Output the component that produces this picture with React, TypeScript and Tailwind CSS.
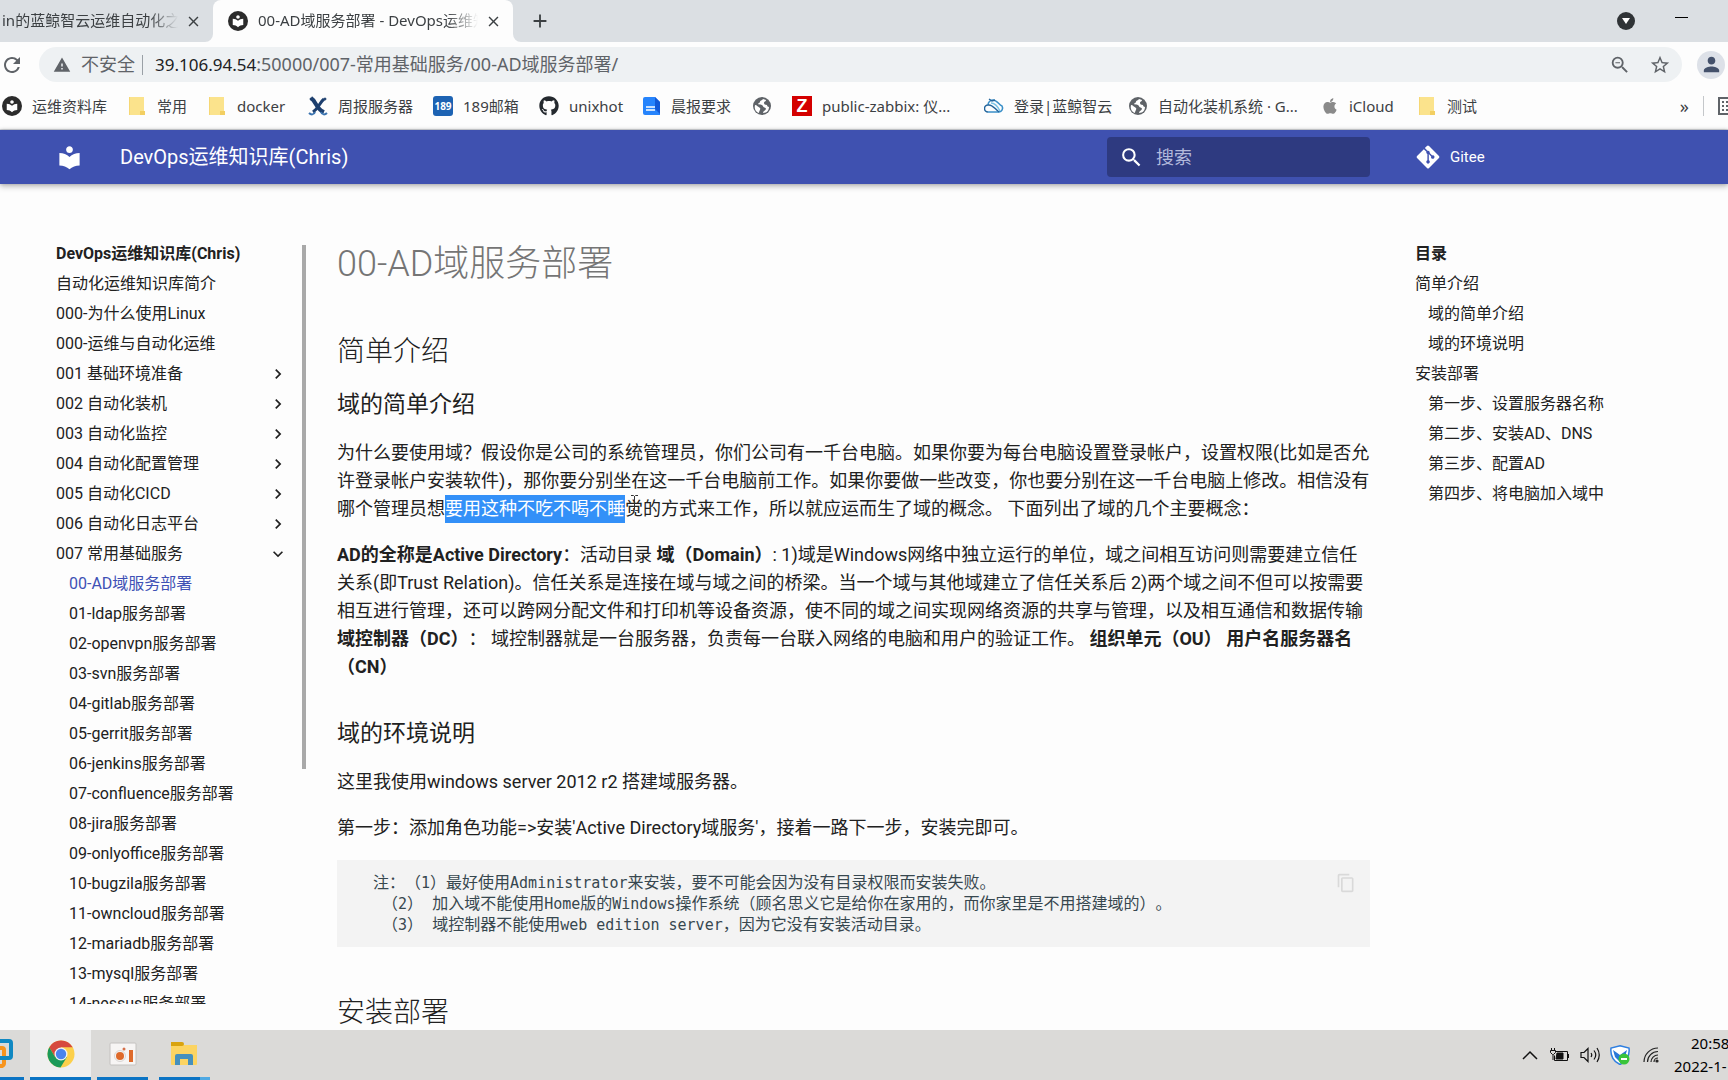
import React from 'react';
import {
  MdAdd,
  MdChevronRight,
  MdClose,
  MdContentCopy,
  MdExpandMore,
  MdLocalLibrary,
  MdPerson,
  MdRefresh,
  MdSearch,
  MdStarBorder,
  MdWarning,
  MdZoomOut,
} from 'react-icons/md';
import { FaApple, FaGitAlt, FaGithub } from 'react-icons/fa';

const LibraryBadge = () => (
  <span className="flex size-5 shrink-0 items-center justify-center rounded-full bg-[#2b2b2b] text-white">
    <MdLocalLibrary className="size-[14px]" />
  </span>
);

const NoteIcon = () => (
  <svg viewBox="0 0 20 20" className="size-5 shrink-0">
    <path d="M2 1h15v14h1v4H2z" fill="#fbe38c" />
    <path d="M13 19v-4h5v4z" fill="#f3cf62" />
    <path d="M2 1h1v18H2z" fill="#f6d774" />
  </svg>
);

const ConfluenceIcon = () => (
  <svg viewBox="0 0 20 20" className="size-5 shrink-0" fill="none" stroke="#1d3f6e">
    <path d="M3 2c5 3 5 11 13 14" strokeWidth="4" />
    <path d="M16 3c-5 4-5 9-11 13" strokeWidth="3" />
    <path d="M1 17c2 2 5 2 6-1M19 17c-2 2-5 2-6-1" strokeWidth="2" stroke="#3b73af" />
    <circle cx="3" cy="3" r="1" fill="#1d3f6e" />
    <circle cx="17" cy="3" r="1" fill="#1d3f6e" />
  </svg>
);

const Mail189Icon = () => (
  <span className="flex size-5 shrink-0 items-center justify-center rounded-[3px] bg-[#1d63b3] font-['Open_Sans',sans-serif] text-[10px] font-bold text-white">
    189
  </span>
);

const DocIcon = () => (
  <svg viewBox="0 0 20 20" className="size-5 shrink-0">
    <path d="M4 1h10l5 5v13H4a2 2 0 0 1-2-2V3a2 2 0 0 1 2-2z" fill="#2684fc" />
    <path d="M14 1l5 5v12l-5-5z" fill="#1259d6" />
    <path d="M5 11h9M5 14h9" stroke="#fff" strokeWidth="1.5" />
  </svg>
);

const GlobeIcon = () => (
  <svg viewBox="0 0 20 20" className="size-5 shrink-0">
    <circle cx="10" cy="10" r="9" fill="#5f6368" />
    <path d="M11 3c-1 2-3 1-3 3 0 1-2 1-2 2 1 1 4 0 5 2 0 2 3 1 3 3-1 2-3 2-3 4 4 0 6-3 6-6-1 0-2-1-2-2-2 0-3-1-3-2 0-2 2-1 2-3z" fill="#fff" />
    <path d="M3 9c2 0 3 2 5 3 1 1-1 3-1 5-3-1-5-4-4-8z" fill="#fff" />
  </svg>
);

const ZabbixIcon = () => (
  <span className="flex size-5 shrink-0 items-center justify-center bg-[#d40000] font-['Liberation_Sans',sans-serif] text-[18px] font-bold text-white">
    Z
  </span>
);

const CloudIcon = () => (
  <svg viewBox="0 0 20 20" className="size-5 shrink-0" fill="none" strokeWidth="1.5">
    <path d="M4 16h11a4 4 0 0 0 3-6c-3-1-5-6-9-6a5 5 0 0 0-5 5" stroke="#3a8fc8" />
    <path d="M4 16a3.500 3.500 0 0 1 0-7c4-1 6 3 11 7M5 3l3 2 3-1" stroke="#23659c" />
    <path d="M7 7c4 0 7 4 9 8" stroke="#7cc4e6" />
  </svg>
);

const BOOKMARKS = [
  { label: '运维资料库', width: 'w-[125px]', icon: <LibraryBadge /> },
  { label: '常用', width: 'w-[80px]', icon: <NoteIcon /> },
  { label: 'docker', width: 'w-[101px]', icon: <NoteIcon /> },
  { label: '周报服务器', width: 'w-[125px]', icon: <ConfluenceIcon /> },
  { label: '189邮箱', width: 'w-[106px]', icon: <Mail189Icon /> },
  { label: 'unixhot', width: 'w-[102px]', icon: <FaGithub className="size-5 shrink-0 text-[#24292e]" /> },
  { label: '晨报要求', width: 'w-[111px]', icon: <DocIcon /> },
  { label: '', width: 'w-[40px]', icon: <GlobeIcon /> },
  { label: 'public-zabbix: 仪...', width: 'w-[192px]', icon: <ZabbixIcon /> },
  { label: '登录|蓝鲸智云', width: 'w-[144px]', icon: <CloudIcon /> },
  { label: '自动化装机系统 · G...', width: 'w-[193px]', icon: <GlobeIcon /> },
  { label: 'iCloud', width: 'w-[96px]', icon: <FaApple className="size-[18px] shrink-0 text-[#8a8a8a]" /> },
  { label: '测试', width: 'w-[80px]', icon: <NoteIcon /> },
];

const NAV = [
  { label: '自动化运维知识库简介' },
  { label: '000-为什么使用Linux' },
  { label: '000-运维与自动化运维' },
  { label: '001 基础环境准备', state: 'closed' },
  { label: '002 自动化装机', state: 'closed' },
  { label: '003 自动化监控', state: 'closed' },
  { label: '004 自动化配置管理', state: 'closed' },
  { label: '005 自动化CICD', state: 'closed' },
  { label: '006 自动化日志平台', state: 'closed' },
  { label: '007 常用基础服务', state: 'open' },
];

const SUB_NAV = [
  '00-AD域服务部署',
  '01-ldap服务部署',
  '02-openvpn服务部署',
  '03-svn服务部署',
  '04-gitlab服务部署',
  '05-gerrit服务部署',
  '06-jenkins服务部署',
  '07-confluence服务部署',
  '08-jira服务部署',
  '09-onlyoffice服务部署',
  '10-bugzila服务部署',
  '11-owncloud服务部署',
  '12-mariadb服务部署',
  '13-mysql服务部署',
  '14-nessus服务部署',
];

const TOC = [
  { label: '简单介绍', children: ['域的简单介绍', '域的环境说明'] },
  {
    label: '安装部署',
    children: ['第一步、设置服务器名称', '第二步、安装AD、DNS', '第三步、配置AD', '第四步、将电脑加入域中'],
  },
];

const TabStrip = () => (
  <div className="flex h-[42px] shrink-0 bg-[#dbdfe3] text-[15px] text-[#3c4043]">
    <div className="flex w-[213px] items-center justify-between pr-[11px] pl-[2px]">
      <span className="w-[176px] overflow-hidden pb-[2px] whitespace-nowrap [mask-image:linear-gradient(to_right,#000_84%,transparent)]">
        in的蓝鲸智云运维自动化之旅
      </span>
      <button aria-label="关闭标签页">
        <MdClose className="size-[17px]" />
      </button>
    </div>
    <div className="relative flex w-[300px] items-center rounded-t-lg bg-[#fdfdfd] pr-[11px] pl-[15px]">
      <svg viewBox="0 0 8 8" className="absolute bottom-0 -left-2 size-2">
        <path d="M8 0v8H0a8 8 0 0 0 8-8z" fill="#fdfdfd" />
      </svg>
      <svg viewBox="0 0 8 8" className="absolute -right-2 bottom-0 size-2">
        <path d="M0 0v8h8a8 8 0 0 1-8-8z" fill="#fdfdfd" />
      </svg>
      <LibraryBadge />
      <span className="ml-[10px] w-[220px] overflow-hidden pb-[2px] whitespace-nowrap [mask-image:linear-gradient(to_right,#000_86%,transparent)]">
        00-AD域服务部署 - DevOps运维知识库
      </span>
      <button aria-label="关闭标签页" className="ml-auto">
        <MdClose className="size-[17px]" />
      </button>
    </div>
    <button aria-label="新标签页" className="ml-[16px]">
      <MdAdd className="size-[22px]" />
    </button>
    <button aria-label="搜索标签页" className="ml-auto">
      <svg viewBox="0 0 18 18" className="size-[18px]">
        <circle cx="9" cy="9" r="9" fill="#2f3336" />
        <path d="M5 6h8l-4 6z" fill="#fff" />
      </svg>
    </button>
    <button aria-label="最小化" className="mr-[40px] ml-[40px] flex w-[13px] items-center pb-2">
      <span className="h-px w-full bg-black" />
    </button>
  </div>
);

const AddressBar = () => (
  <div className="flex h-[45px] shrink-0 items-center bg-[#fdfdfd] text-[#5f6368]">
    <button aria-label="重新加载" className="w-[39px]">
      <MdRefresh className="size-6" />
    </button>
    <div className="flex h-[35px] flex-1 items-center rounded-full bg-[#eef1f3] pr-[11px] pl-[14px] text-[18px]">
      <MdWarning className="size-[18px]" />
      <span className="ml-[10px]">不安全</span>
      <span className="mx-[7px] h-5 w-px bg-[#9aa0a6]" />
      <span className="ml-[5px]">
        <span className="text-[17px] text-[#202124]">39.106.94.54</span>
        :50000/007-常用基础服务/00-AD域服务部署/
      </span>
      <button aria-label="缩放" className="ml-auto">
        <MdZoomOut className="size-[22px]" />
      </button>
      <button aria-label="收藏" className="ml-[18px]">
        <MdStarBorder className="size-[22px]" />
      </button>
    </div>
    <button
      aria-label="个人资料"
      className="mr-[3px] ml-[15px] flex size-7 items-center justify-center rounded-full bg-[#dde1e8] text-[#44516b]"
    >
      <MdPerson className="size-[23px]" />
    </button>
  </div>
);

const BookmarkBar = () => (
  <div className="flex h-[43px] shrink-0 items-center overflow-hidden border-b border-[#dadce0] bg-[#fdfdfd] pb-1 pl-[2px] text-[15px] text-[#3c4043]">
    {BOOKMARKS.map((b, i) => (
      <button key={i} aria-label={b.label || '书签'} className={`flex shrink-0 items-center gap-[10px] whitespace-nowrap ${b.width}`}>
        {b.icon}
        {b.label}
      </button>
    ))}
    <button aria-label="更多书签" className="ml-auto text-[18px] leading-none">
      »
    </button>
    <span className="ml-[14px] h-5 w-px shrink-0 bg-[#c4c7ca]" />
    <button aria-label="阅读清单" className="ml-[14px] w-[10px] overflow-hidden">
      <svg viewBox="0 0 18 18" className="size-[18px]" fill="none" stroke="#5f6368" strokeWidth="2">
        <path d="M1 1h16v16H1z" />
        <path d="M4 5h2M4 9h2M4 13h2M8 5h6M8 9h6M8 13h6" />
      </svg>
    </button>
  </div>
);

const SiteHeader = () => (
  <header className="relative z-10 flex h-[54px] shrink-0 items-center bg-[#3f51b0] text-white shadow-[0_0_4px_rgba(0,0,0,0.25),0_3px_6px_rgba(0,0,0,0.2)]">
    <a href="#" aria-label="首页" className="ml-[56px]">
      <MdLocalLibrary className="size-[27px]" />
    </a>
    <span className="ml-[37px] text-[20px]">DevOps运维知识库(Chris)</span>
    <label className="ml-auto flex h-10 w-[263px] items-center rounded-sm bg-[#2e3a80] pl-[12px]">
      <MdSearch className="size-[25px] shrink-0" />
      <input
        aria-label="搜索"
        placeholder="搜索"
        className="ml-[12px] w-full bg-transparent text-[18px] outline-none placeholder:text-[#b3b9dc]"
      />
    </label>
    <a href="#" className="flex w-[358px] items-center gap-[9px] pl-[45px] text-[15px]">
      <FaGitAlt className="size-[26px]" />
      Gitee
    </a>
  </header>
);

const Sidebar = () => (
  <aside className="flex w-[306px] shrink-0 pt-[55px] pb-[26px] pl-[56px]">
    <nav className="flex-1 overflow-hidden text-[16px] leading-[30px] whitespace-nowrap">
      <div className="font-bold">DevOps运维知识库(Chris)</div>
      {NAV.map(item => (
        <a key={item.label} href="#" className="flex items-center justify-between pr-[14px]">
          {item.label}
          {item.state === 'closed' && <MdChevronRight className="size-5" />}
          {item.state === 'open' && <MdExpandMore className="size-5" />}
        </a>
      ))}
      <div className="pl-[13px]">
        {SUB_NAV.map((label, i) => (
          <a key={label} href="#" className={i === 0 ? 'block text-[#4051b5]' : 'block'}>
            {label}
          </a>
        ))}
      </div>
    </nav>
    <div className="mt-[6px] h-[524px] w-1 bg-[#a9a9a9]" />
  </aside>
);

// Latin runs in the code block are set one pixel smaller than the Chinese text
const L = ({ children }: { children: React.ReactNode }) => <span className="text-[15px] leading-[18px]">{children}</span>;

const Article = () => (
  <article className="mr-[45px] ml-[31px] min-w-0 flex-1 pt-14 text-[18px] leading-7 [text-spacing-trim:space-all]">
    <h1 className="text-[36px] leading-[48px] font-light text-[#757575]">00-AD域服务部署</h1>
    <h2 className="mt-[44px] text-[28px] leading-10 font-light">简单介绍</h2>
    <h3 className="mt-4 text-[23px] leading-[34px]">域的简单介绍</h3>
    <p className="mt-[17px]">
      为什么要使用域？假设你是公司的系统管理员，你们公司有一千台电脑。如果你要为每台电脑设置登录帐户，设置权限(比如是否允许登录帐户安装软件)，那你要分别坐在这一千台电脑前工作。如果你要做一些改变，你也要分别在这一千台电脑上修改。相信没有哪个管理员想
      <span className="relative inline-block bg-[#3390f8] text-white">
        要用这种不吃不喝不睡
        <svg viewBox="0 0 8 16" className="absolute top-0 -right-[13px] h-4 w-2" fill="none" stroke="#333">
          <path d="M1 .5h2.500l1 1 1-1H8M4.500 1v13M1 15.500h2.500l1-1 1 1H8" />
        </svg>
      </span>
      觉的方式来工作，所以就应运而生了域的概念。 下面列出了域的几个主要概念：
    </p>
    <p className="mt-[18px]">
      <strong>AD的全称是Active Directory</strong>：活动目录 <strong>域（Domain）</strong>
      : 1)域是Windows网络中独立运行的单位，域之间相互访问则需要建立信任关系(即Trust Relation)。信任关系是连接在域与域之间的桥梁。当一个域与其他域建立了信任关系后
      2)两个域之间不但可以按需要相互进行管理，还可以跨网分配文件和打印机等设备资源，使不同的域之间实现网络资源的共享与管理，以及相互通信和数据传输{' '}
      <strong>域控制器（DC）</strong>： 域控制器就是一台服务器，负责每一台联入网络的电脑和用户的验证工作。{' '}
      <strong>组织单元（OU） 用户名服务器名（CN）</strong>
    </p>
    <h3 className="mt-[36px] text-[23px] leading-[34px]">域的环境说明</h3>
    <p className="mt-[17px]">这里我使用windows server 2012 r2 搭建域服务器。</p>
    <p className="mt-[18px]">第一步：添加角色功能=&gt;安装'Active Directory域服务'，接着一路下一步，安装完即可。</p>
    <div className="relative mt-[18px] bg-[#f3f3f3] py-3 pl-[36px] text-[#37474f]">
      <pre className="font-['DejaVu_Sans_Mono','Noto_Sans_CJK_SC',monospace] text-[16px] leading-[21px]">
        注：（<L>1</L>）最好使用<L>Administrator</L>来安装，要不可能会因为没有目录权限而安装失败。{'\n'}
        <L> </L>（<L>2</L>）<L> </L>加入域不能使用<L>Home</L>版的<L>Windows</L>操作系统（顾名思义它是给你在家用的，而你家里是不用搭建域的）。{'\n'}
        <L> </L>（<L>3</L>）<L> </L>域控制器不能使用<L>web edition server</L>，因为它没有安装活动目录。
      </pre>
      <button aria-label="复制" className="absolute top-[13px] right-[14px] text-[#d9d9d9]">
        <MdContentCopy className="size-5" />
      </button>
    </div>
    <h2 className="mt-[46px] text-[28px] leading-10 font-light">安装部署</h2>
  </article>
);

const TableOfContents = () => (
  <nav className="w-[313px] shrink-0 pt-[55px] text-[16px] leading-[30px]">
    <div className="font-bold">目录</div>
    {TOC.map(section => (
      <div key={section.label}>
        <a href="#" className="block">
          {section.label}
        </a>
        {section.children.map(c => (
          <a key={c} href="#" className="block pl-[13px]">
            {c}
          </a>
        ))}
      </div>
    ))}
  </nav>
);

const Taskbar = () => (
  <footer className="flex h-[50px] shrink-0 items-stretch overflow-hidden bg-[#dbdad8] text-black">
    <button aria-label="VMware" className="flex w-6 items-center border-b-3 border-[#0b74c4]">
      <svg viewBox="0 0 13 31" className="h-[31px] w-[13px]" fill="none" strokeWidth="4">
        <path d="M-4 10h6a2 2 0 0 1 2 2v13a3 3 0 0 1-2 3h-6" stroke="#f7941d" />
        <path d="M-4 3h13a2 2 0 0 1 2 2v13a2 2 0 0 1-2 2h-13" stroke="#1088c2" />
      </svg>
    </button>
    <button aria-label="Chrome" className="ml-[6px] flex w-[61px] items-center justify-center border-b-3 border-[#0b74c4] bg-[#efefef]">
      <svg viewBox="0 0 28 28" className="size-7">
        <circle cx="14" cy="14" r="13.500" fill="#fcd04b" />
        <path d="M14 14 8.200 17.300 2.300 7.200A13.500 13.500 0 0 1 25.700 7.300H14z" fill="#d64a3d" />
        <path d="M2.300 7.200A13.500 13.500 0 0 0 13.500 27.500L19.800 17.300 14 14l-5.800 3.300z" fill="#1b9a59" />
        <circle cx="14" cy="14" r="6.500" fill="#f4f4f4" />
        <circle cx="14" cy="14" r="5.200" fill="#4a84ee" />
      </svg>
    </button>
    <button aria-label="录屏" className="ml-[6px] flex w-[51px] items-center justify-center border-b-3 border-[#0b74c4]">
      <svg viewBox="0 0 28 24" className="h-6 w-7">
        <rect x="1" y="1" width="26" height="22" rx="1" fill="#f7f5f4" stroke="#c4c2c0" />
        <circle cx="11" cy="14" r="5.500" fill="none" stroke="#d9d6d4" />
        <circle cx="11" cy="14" r="4" fill="#de6a2b" />
        <circle cx="15" cy="7" r="1.500" fill="#d5704a" />
        <path d="M22 8v12" stroke="#de6a2b" strokeWidth="4" />
      </svg>
    </button>
    <button aria-label="文件资源管理器" className="ml-[11px] flex w-[41px] items-center justify-end border-b-3 border-[#0b74c4] pr-[2px]">
      <svg viewBox="0 0 28 24" className="h-6 w-7">
        <path d="M1 3h26v19a1 1 0 0 1-1 1H2a1 1 0 0 1-1-1z" fill="#fcd462" />
        <path d="M1 0h11a2 2 0 0 1 0 4H1z" fill="#d9a30f" />
        <path d="M5 23V14a2 2 0 0 1 2-2h14a2 2 0 0 1 2 2v9h-5v-6h-8v6z" fill="#4690bd" />
      </svg>
    </button>
    <span className="w-[10px] border-b-3 border-[#4fa9e3]" />
    <div className="ml-auto flex items-center">
      <svg viewBox="0 0 16 10" className="h-[10px] w-4" fill="none" stroke="#111" strokeWidth="1.500">
        <path d="M1 9l7-7 7 7" />
      </svg>
      <svg viewBox="0 0 20 16" className="ml-[12px] h-4 w-5" fill="none" stroke="#111">
        <path d="M5.500 4.500h12v9h-13v-5M18.500 7v4" />
        <path d="M7 6h6v6H6z" fill="#111" />
        <path d="M1.500 1v2M4.500 1v2M.5 3.500h5v2l-2 2h-1l-2-2zM3 8v5" />
      </svg>
      <svg viewBox="0 0 20 18" className="ml-[10px] h-[18px] w-5" fill="none" stroke="#111" strokeWidth="1.200">
        <path d="M1 6.500h3l4-4v13l-4-4H1z" />
        <path d="M11 7q1.500 2 0 4M14 4.500q3.500 4.500 0 9M17 2q4.500 7 0 14" />
      </svg>
      <svg viewBox="0 0 20 20" className="ml-[10px] size-5">
        <path d="M10 .8 19 3c1 8-3 14-9 16.500C4 17 0 11 1 3z" fill="#fff" stroke="#2f7fe0" strokeWidth="1.500" />
        <path d="M3 5l7 5 7-5-2 7-5 5-5-5z" fill="#2a78d8" />
        <circle cx="14" cy="14" r="5.500" fill="#3ac43a" />
        <path d="M11 14h6" stroke="#fff" strokeWidth="2" />
      </svg>
      <svg viewBox="0 0 16 16" className="ml-[13px] size-4" fill="none" stroke="#222" strokeWidth="1.200">
        <path d="M1 15A14 14 0 0 1 15 1M4.500 15A10.500 10.500 0 0 1 15 4.500M8 15a7 7 0 0 1 7-7M11 15a4 4 0 0 1 4-4" />
        <circle cx="14" cy="14" r="1" fill="#222" />
      </svg>
      <div className="ml-[15px] w-[54px] overflow-hidden pb-[1px] text-[15px] leading-[23px] whitespace-nowrap">
        <div className="pl-[17px]">20:58</div>
        <div>2022-1-</div>
      </div>
    </div>
  </footer>
);

export default function App() {
  return (
    <div
      lang="zh-CN"
      className="flex h-screen flex-col overflow-hidden bg-[#fdfdfd] font-['Noto_Sans','Noto_Sans_CJK_SC',sans-serif]"
    >
      <TabStrip />
      <AddressBar />
      <BookmarkBar />
      <div className="flex min-h-0 flex-1 flex-col font-['Roboto','Noto_Sans_CJK_SC',sans-serif] text-[#212121]">
        <SiteHeader />
        <main className="flex min-h-0 flex-1 overflow-hidden">
          <Sidebar />
          <Article />
          <TableOfContents />
        </main>
      </div>
      <Taskbar />
    </div>
  );
}
